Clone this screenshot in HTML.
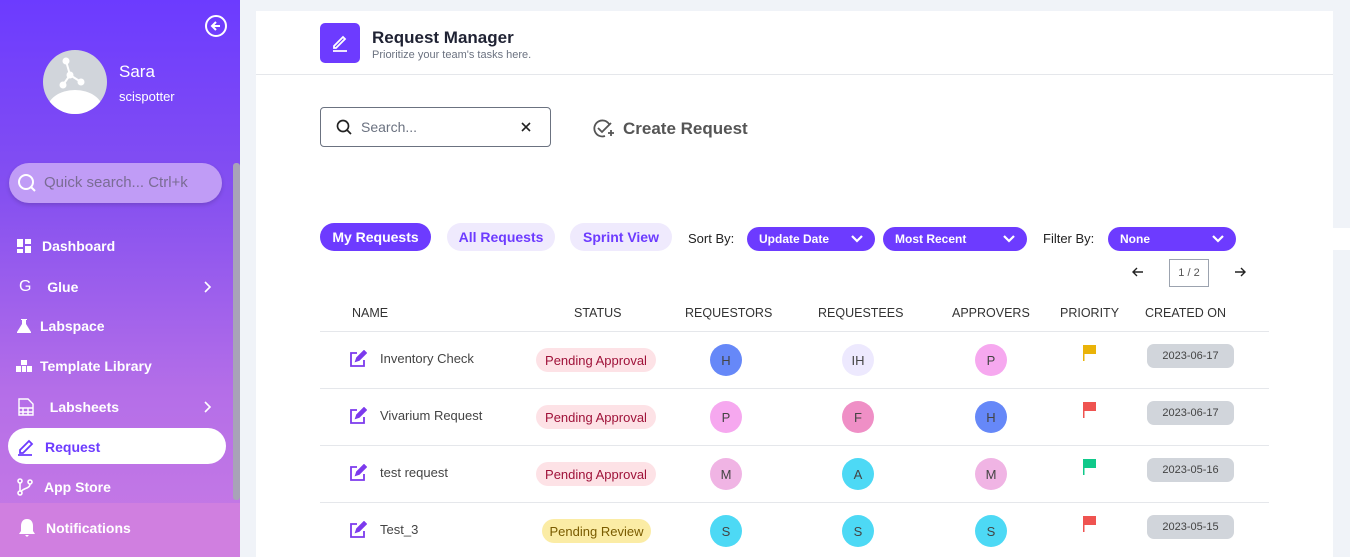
<!DOCTYPE html>
<html><head><meta charset="utf-8"><style>
*{box-sizing:border-box;margin:0;padding:0}
body{width:1350px;height:557px;overflow:hidden;background:#f0f3f8;font-family:"Liberation Sans",sans-serif;position:relative}
.abs{position:absolute}
#sb{left:0;top:0;width:240px;height:557px;background:linear-gradient(180deg,#6c3bff 0%,#8550f0 35%,#b46ee8 70%,#c97be4 100%)}
.nav{position:absolute;left:16px;color:#fff;font-size:14px;font-weight:bold;display:flex;align-items:center;gap:8px}
.main{left:256px;top:11px;width:1077px;height:546px;background:#fff}
.tab{position:absolute;top:223px;height:28px;border-radius:14px;font-size:14px;font-weight:bold;display:flex;align-items:center;justify-content:center;background:#efeafd;color:#6d3bff}
.dd{position:absolute;top:227px;height:24px;border-radius:12px;background:#6d3bff;color:#fff;font-size:12px;font-weight:bold;display:flex;align-items:center;padding-left:12px}
.dd svg{position:absolute;right:12px;top:8px}
.th{position:absolute;top:306px;font-size:12.5px;color:#333}
.line{position:absolute;left:320px;width:949px;height:1px;background:#e5e7eb}
.name{position:absolute;left:380px;font-size:13px;color:#444}
.st{position:absolute;height:24px;border-radius:12px;font-size:13px;display:flex;align-items:center;justify-content:center}
.av{position:absolute;width:32px;height:32px;border-radius:50%;font-size:13px;color:#444;display:flex;align-items:center;justify-content:center}
.dt{position:absolute;left:1147px;width:87px;height:24px;border-radius:7px;background:#d1d5db;font-size:11px;color:#444;display:flex;align-items:center;justify-content:center}
</style></head><body>
<div id="sb" class="abs">
 <svg class="abs" style="left:204px;top:14px" width="24" height="24" viewBox="0 0 24 24" fill="none" stroke="#fff" stroke-width="2"><circle cx="12" cy="12" r="10"/><path d="M16 12H8M12 8l-4 4 4 4"/></svg>
 <div class="abs" style="left:43px;top:50px;width:64px;height:64px;border-radius:50%;background:#d1d5db;overflow:hidden">
  <div class="abs" style="left:4px;top:40px;width:56px;height:40px;border-radius:50%;background:#fff"></div>
  <svg class="abs" style="left:0;top:0" width="64" height="64"><path d="M23 11L27 25L20 35M27 25L38 32" stroke="#fff" stroke-width="2" fill="none"/><circle cx="23" cy="11" r="3.5" fill="#fff"/><circle cx="27" cy="25" r="3.5" fill="#fff"/><circle cx="20" cy="35" r="3.5" fill="#fff"/><circle cx="38" cy="32" r="3.5" fill="#fff"/></svg>
 </div>
 <div class="abs" style="left:119px;top:62px;color:#fff;font-size:17px">Sara</div>
 <div class="abs" style="left:119px;top:89px;color:#fff;font-size:13px">scispotter</div>
 <div class="abs" style="left:233px;top:163px;width:7px;height:337px;border-radius:3px;background:#a8a3b8"></div>
 <div class="abs" style="left:9px;top:163px;width:213px;height:40px;border-radius:20px;background:#c09cf6;box-shadow:0 2px 4px rgba(0,0,0,.15)"></div>
 <svg class="abs" style="left:17px;top:173px" width="20" height="20" fill="none" stroke="#fff" stroke-width="2"><circle cx="9" cy="9" r="7"/><path d="M14 14l4 4"/></svg>
 <div class="abs" style="left:44px;top:174px;font-size:15px;color:#7a6c94">Quick search... Ctrl+k</div>
 <div class="nav" style="top:238px"><svg width="18" height="16" fill="#fff"><rect x="1" y="1" width="6" height="8"/><rect x="9" y="1" width="6" height="5"/><rect x="1" y="11" width="6" height="4"/><rect x="9" y="8" width="6" height="7"/></svg>Dashboard</div>
 <div class="nav" style="top:278px;left:19px"><span style="font-weight:normal;font-size:16px">G</span>&nbsp;&nbsp;Glue</div>
 <svg class="abs" style="left:202px;top:280px" width="10" height="14" fill="none" stroke="#fff" stroke-width="1.6"><path d="M3 2l5 5-5 5"/></svg>
 <div class="nav" style="top:318px"><svg width="16" height="16" fill="#fff"><path d="M5 1h6v1H10v4l5 8v1H1v-1l5-8V2H5z"/></svg>Labspace</div>
 <div class="nav" style="top:358px"><svg width="16" height="16" fill="#fff"><rect x="5" y="2" width="6" height="5"/><rect x="0" y="8" width="5" height="6"/><rect x="6" y="8" width="4" height="6"/><rect x="11" y="8" width="5" height="6"/></svg>Template Library</div>
 <div class="nav" style="top:398px;left:18px"><svg width="16" height="18" fill="none" stroke="#fff" stroke-width="1.4"><path d="M1 1h9l5 5v11H1zM1 10h14M1 14h14M5 10v7M10 10v7"/></svg>&nbsp;&nbsp;Labsheets</div>
 <svg class="abs" style="left:202px;top:400px" width="10" height="14" fill="none" stroke="#fff" stroke-width="1.6"><path d="M3 2l5 5-5 5"/></svg>
 <div class="abs" style="left:8px;top:428px;width:218px;height:36px;border-radius:18px;background:#fff"></div>
 <div class="nav" style="top:438px;left:17px;color:#6d3bff;gap:10px"><svg width="18" height="18" fill="none" stroke="#6d3bff" stroke-width="1.8"><path d="M3 12l9-9 3 3-9 9H3z M1 17h14"/></svg>Request</div>
 <div class="nav" style="top:478px;gap:10px"><svg width="18" height="18" fill="none" stroke="#fff" stroke-width="1.6"><circle cx="4" cy="3" r="2"/><circle cx="4" cy="15" r="2"/><circle cx="14" cy="4" r="2"/><path d="M4 5v8M14 6c0 5-8 4-9 8"/></svg>App Store</div>
 <div class="abs" style="left:0;top:503px;width:240px;height:54px;background:#d07fe0"></div>
 <div class="nav" style="top:518px;left:17px;gap:9px"><svg width="20" height="20" fill="#fff"><path d="M10 1c4 0 6 3 6 7v5l2 3H2l2-3V8c0-4 2-7 6-7zM8 17h4l-2 2z"/></svg>Notifications</div>
</div>
<div class="abs main"></div>
<div class="abs" style="left:1333px;top:228px;width:17px;height:22px;background:#fff"></div>
<div class="abs" style="left:320px;top:23px;width:40px;height:40px;border-radius:5px;background:#6d3bff"></div>
<svg class="abs" style="left:330px;top:33px" width="20" height="20" fill="none" stroke="#fff" stroke-width="1.8"><path d="M4 13l9-9 2 2-9 9H4zM3 18h14"/></svg>
<div class="abs" style="left:372px;top:28px;font-size:17px;color:#1f2233;font-weight:bold">Request Manager</div>
<div class="abs" style="left:372px;top:49px;font-size:11px;color:#6b7280">Prioritize your team's tasks here.</div>
<div class="abs" style="left:256px;top:74px;width:1077px;height:1px;background:#e5e7eb"></div>
<div class="abs" style="left:320px;top:107px;width:231px;height:40px;border:1px solid #6b7280;border-radius:4px"></div>
<svg class="abs" style="left:336px;top:119px" width="16" height="16" fill="none" stroke="#222" stroke-width="1.7"><circle cx="7" cy="7" r="5.5"/><path d="M11 11l4 4"/></svg>
<div class="abs" style="left:361px;top:119px;font-size:14px;color:#6b7280">Search...</div>
<svg class="abs" style="left:520px;top:121px" width="12" height="12" stroke="#222" stroke-width="1.6"><path d="M2 2l8 8M10 2l-8 8"/></svg>
<svg class="abs" style="left:592px;top:118px" width="24" height="22" fill="none" stroke="#555" stroke-width="1.8"><path d="M17 6A8 8 0 1 0 13 18"/><path d="M6 10l4 4 9-9M16 15h6M19 12v6"/></svg>
<div class="abs" style="left:623px;top:119px;font-size:17px;color:#555;font-weight:bold">Create Request</div>
<div class="tab" style="left:320px;width:111px;background:#6d3bff;color:#fff">My Requests</div>
<div class="tab" style="left:447px;width:108px">All Requests</div>
<div class="tab" style="left:570px;width:102px">Sprint View</div>
<div class="abs" style="left:688px;top:231px;font-size:13px;color:#222">Sort By:</div>
<div class="dd" style="left:747px;width:128px">Update Date<svg width="12" height="9" fill="none" stroke="#fff" stroke-width="2.2"><path d="M1 1l5 5 5-5"/></svg></div>
<div class="dd" style="left:883px;width:144px">Most Recent<svg width="12" height="9" fill="none" stroke="#fff" stroke-width="2.2"><path d="M1 1l5 5 5-5"/></svg></div>
<div class="abs" style="left:1043px;top:231px;font-size:13px;color:#222">Filter By:</div>
<div class="dd" style="left:1108px;width:128px">None<svg width="12" height="9" fill="none" stroke="#fff" stroke-width="2.2"><path d="M1 1l5 5 5-5"/></svg></div>
<svg class="abs" style="left:1132px;top:267px" width="12" height="10" fill="none" stroke="#222" stroke-width="1.4"><path d="M11 5H1M5 1L1 5l4 4"/></svg>
<div class="abs" style="left:1169px;top:259px;width:40px;height:28px;border:1px solid #9ca3af;display:flex;align-items:center;justify-content:center;font-size:11px;color:#555">1 / 2</div>
<svg class="abs" style="left:1234px;top:267px" width="12" height="10" fill="none" stroke="#222" stroke-width="1.4"><path d="M1 5h10M7 1l4 4-4 4"/></svg>
<div class="th" style="left:352px">NAME</div><div class="th" style="left:574px">STATUS</div><div class="th" style="left:685px">REQUESTORS</div><div class="th" style="left:818px">REQUESTEES</div><div class="th" style="left:952px">APPROVERS</div><div class="th" style="left:1060px">PRIORITY</div><div class="th" style="left:1145px">CREATED ON</div>
<div class="line" style="top:331px"></div><div class="line" style="top:388px"></div><div class="line" style="top:445px"></div><div class="line" style="top:502px"></div>

<svg class="abs" style="left:349px;top:350px" width="18" height="18" fill="none" stroke="#7c3aed" stroke-width="1.8"><path d="M8 3H2v13h13v-6"/><path d="M7 11l1-3 7-7 2 2-7 7z" fill="#7c3aed"/></svg>
<div class="name" style="top:351px">Inventory Check</div>
<div class="st" style="left:536px;top:348px;width:120px;background:#fde2e6;color:#9f1239">Pending Approval</div>
<div class="av" style="left:710px;top:344px;background:#6688f8">H</div>
<div class="av" style="left:842px;top:344px;background:#ede9fe">IH</div>
<div class="av" style="left:975px;top:344px;background:#f6a8ef">P</div>
<svg class="abs" style="left:1082px;top:344px" width="16" height="18"><rect x="1" y="1" width="1.5" height="16" fill="#eab308"/><rect x="1" y="1" width="13" height="9" fill="#eab308"/></svg>
<div class="dt" style="top:344px">2023-06-17</div>

<svg class="abs" style="left:349px;top:407px" width="18" height="18" fill="none" stroke="#7c3aed" stroke-width="1.8"><path d="M8 3H2v13h13v-6"/><path d="M7 11l1-3 7-7 2 2-7 7z" fill="#7c3aed"/></svg>
<div class="name" style="top:408px">Vivarium Request</div>
<div class="st" style="left:536px;top:405px;width:120px;background:#fde2e6;color:#9f1239">Pending Approval</div>
<div class="av" style="left:710px;top:401px;background:#f6a8ef">P</div>
<div class="av" style="left:842px;top:401px;background:#ef8fc6">F</div>
<div class="av" style="left:975px;top:401px;background:#6688f8">H</div>
<svg class="abs" style="left:1082px;top:401px" width="16" height="18"><rect x="1" y="1" width="1.5" height="16" fill="#ef5350"/><rect x="1" y="1" width="13" height="9" fill="#ef5350"/></svg>
<div class="dt" style="top:401px">2023-06-17</div>

<svg class="abs" style="left:349px;top:464px" width="18" height="18" fill="none" stroke="#7c3aed" stroke-width="1.8"><path d="M8 3H2v13h13v-6"/><path d="M7 11l1-3 7-7 2 2-7 7z" fill="#7c3aed"/></svg>
<div class="name" style="top:465px">test request</div>
<div class="st" style="left:536px;top:462px;width:120px;background:#fde2e6;color:#9f1239">Pending Approval</div>
<div class="av" style="left:710px;top:458px;background:#f0b4e4">M</div>
<div class="av" style="left:842px;top:458px;background:#4dd9f5">A</div>
<div class="av" style="left:975px;top:458px;background:#f0b4e4">M</div>
<svg class="abs" style="left:1082px;top:458px" width="16" height="18"><rect x="1" y="1" width="1.5" height="16" fill="#10c98a"/><rect x="1" y="1" width="13" height="9" fill="#10c98a"/></svg>
<div class="dt" style="top:458px">2023-05-16</div>

<svg class="abs" style="left:349px;top:521px" width="18" height="18" fill="none" stroke="#7c3aed" stroke-width="1.8"><path d="M8 3H2v13h13v-6"/><path d="M7 11l1-3 7-7 2 2-7 7z" fill="#7c3aed"/></svg>
<div class="name" style="top:522px">Test_3</div>
<div class="st" style="left:542px;top:519px;width:109px;background:#fbeca5;color:#7a5b00">Pending Review</div>
<div class="av" style="left:710px;top:515px;background:#4dd9f5">S</div>
<div class="av" style="left:842px;top:515px;background:#4dd9f5">S</div>
<div class="av" style="left:975px;top:515px;background:#4dd9f5">S</div>
<svg class="abs" style="left:1082px;top:515px" width="16" height="18"><rect x="1" y="1" width="1.5" height="16" fill="#ef5350"/><rect x="1" y="1" width="13" height="9" fill="#ef5350"/></svg>
<div class="dt" style="top:515px">2023-05-15</div>
</body></html>
